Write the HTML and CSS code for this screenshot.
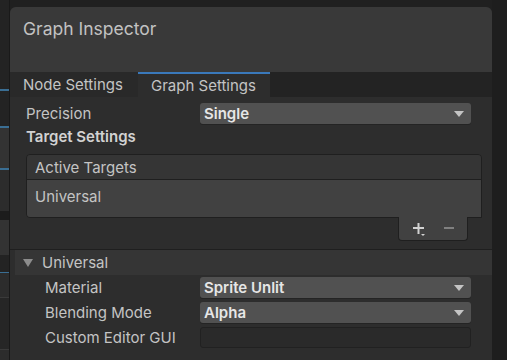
FILE: index.html
```html
<html>
    <head>
        <title>Graph Inspector</title>
        <link rel="stylesheet" href="styles.css">
    </head>
    <body>
        <div class="graph">
            <div class="g-dark" style="height:89px"></div>
            <div class="g-wire"></div>
            <div class="g-dark" style="height:36px"></div>
            <div class="g-wire"></div>
            <div class="g-node" style="height:40px"></div>
            <div class="g-wire"></div>
            <div class="g-node2" style="height:41px"></div>
            <div class="g-black" style="height:9px"></div>
            <div class="g-node" style="height:35px"></div>
            <div class="g-dark" style="height:17px"></div>
            <div class="g-wire"></div>
            <div class="g-node2" style="height:24px"></div>
            <div class="g-line"></div>
            <div class="g-dark2" style="height:51px"></div>
            <div class="g-line"></div>
            <div class="g-node2" style="height:10px"></div>
        </div>

        <div class="inspector">
            <div class="title">Graph Inspector</div>

            <div class="tabs">
                <div class="tab">Node Settings</div>
                <div class="tab active">Graph Settings</div>
            </div>

            <div class="content">
                <div class="row">
                    <span class="label">Precision</span>
                    <div class="dropdown"><span>Single</span><i class="arrow"></i></div>
                </div>
                <div class="section">Target Settings</div>

                <div class="list">
                    <div class="list-head">Active Targets</div>
                    <div class="list-body">Universal</div>
                </div>
                <div class="list-foot">
                    <div class="buttons">
                        <svg width="16" height="14" viewBox="0 0 16 14">
                            <rect x="0" y="4" width="11" height="2" fill="#d2d2d2"/>
                            <rect x="4.5" y="0" width="2" height="11" fill="#d2d2d2"/>
                            <path d="M8 11h4l-2 2z" fill="#d2d2d2"/>
                        </svg>
                        <svg width="11" height="14" viewBox="0 0 11 14">
                            <rect x="0" y="4" width="10" height="2" fill="#808080"/>
                        </svg>
                    </div>
                </div>

                <div class="foldout">
                    <div class="fold-head"><i class="fold-arrow"></i>Universal</div>
                    <div class="fold-body">
                        <div class="row">
                            <span class="label">Material</span>
                            <div class="dropdown"><span>Sprite Unlit</span><i class="arrow"></i></div>
                        </div>
                        <div class="row">
                            <span class="label">Blending Mode</span>
                            <div class="dropdown"><span>Alpha</span><i class="arrow"></i></div>
                        </div>
                        <div class="row">
                            <span class="label">Custom Editor GUI</span>
                            <div class="textfield"></div>
                        </div>
                    </div>
                </div>
            </div>
        </div>

        <div class="side"></div>
    </body>
</html>
```

FILE: styles.css
```css
body {
    margin: 0;
    width: 507px;
    height: 360px;
    overflow: hidden;
    display: flex;
    background: #202020;
    font-family: Inter, "Noto Sans", sans-serif;
    font-size: 15px;
    color: #c4c4c4;
}

/* graph canvas peeking out on the left */
.graph {
    width: 9px;
    display: flex;
    flex-direction: column;
    border-right: 1px solid #191919;
}
.g-dark { background: #232323; }
.g-dark2 { background: #262626; }
.g-black { background: #1c1c1c; }
.g-node { background: #333333; }
.g-node2 { background: #2c2c2c; }
.g-wire { height: 2px; background: #3a6e93; }
.g-line { height: 1px; background: #3a3a3a; }

.inspector {
    width: 482px;
    margin-top: 7px;
    display: flex;
    flex-direction: column;
    background: #2d2d2d;
    border-radius: 6px 6px 0 0;
    overflow: hidden;
}

.side {
    flex: 1;
    background: #1e1e1e;
}

.title {
    height: 65px;
    background: #393939;
    padding: 11px 0 0 13px;
    box-sizing: border-box;
    font-size: 17.5px;
    color: #c2c2c2;
}

.tabs {
    height: 25px;
    display: flex;
    background: #232323;
}
.tab {
    padding: 0 13px;
    line-height: 25px;
    background: #292929;
    width: 128px;
    box-sizing: border-box;
}
.tab.active {
    width: 132px;
    background: #2d2d2d;
    border-top: 2px solid #3a79bb;
    line-height: 23px;
}

.content {
    padding-top: 6px;
}

.row {
    display: flex;
    align-items: center;
    height: 21px;
    margin-bottom: 4px;
}
.label {
    width: 174px;
    padding-left: 16px;
}
.dropdown {
    width: 271px;
    height: 21px;
    background: #515151;
    border-radius: 3px;
    display: flex;
    align-items: center;
    justify-content: space-between;
    padding: 0 7px 0 4px;
    box-sizing: border-box;
    color: #e6e6e6;
    font-weight: 600;
    box-shadow: 0 1px 0 #242424;
}
.arrow {
    width: 0;
    height: 0;
    border-left: 5px solid transparent;
    border-right: 5px solid transparent;
    border-top: 6px solid #c4c4c4;
}
.textfield {
    width: 271px;
    height: 21px;
    background: #2a2a2a;
    border: 1px solid #212121;
    border-radius: 3px;
    box-sizing: border-box;
}

.section {
    padding-left: 16px;
    font-weight: 600;
    color: #d2d2d2;
    height: 27px;
    line-height: 20px;
    margin-top: -1px;
}

.list {
    margin: 0 10px 0 16px;
    border: 1px solid #1f1f1f;
    border-radius: 4px 4px 0 4px;
    overflow: hidden;
}
.list-head {
    height: 24px;
    line-height: 25px;
    background: #353535;
    border-bottom: 1px solid #1f1f1f;
    padding-left: 8px;
}
.list-body {
    height: 37px;
    line-height: 34px;
    background: #414141;
    padding-left: 8px;
}

.list-foot {
    display: flex;
    justify-content: flex-end;
    padding-right: 24px;
    height: 31px;
}
.buttons {
    width: 70px;
    height: 24px;
    margin-top: -1px;
    background: #414141;
    border: 1px solid #1f1f1f;
    border-top: none;
    border-radius: 0 0 4px 4px;
    display: flex;
    align-items: center;
    gap: 15px;
    padding: 2px 0 0 14px;
    box-sizing: border-box;
}

.foldout {
    border-top: 1px solid #1f1f1f;
}
.fold-head {
    margin-left: 5px;
    height: 25px;
    background: #353535;
    display: flex;
    align-items: center;
    padding-left: 8px;
}
.fold-arrow {
    width: 0;
    height: 0;
    border-left: 5px solid transparent;
    border-right: 5px solid transparent;
    border-top: 8px solid #8c8c8c;
    margin-right: 9px;
}
.fold-body {
    padding-top: 2px;
}
.fold-body .label {
    padding-left: 35px;
    width: 155px;
}
```
